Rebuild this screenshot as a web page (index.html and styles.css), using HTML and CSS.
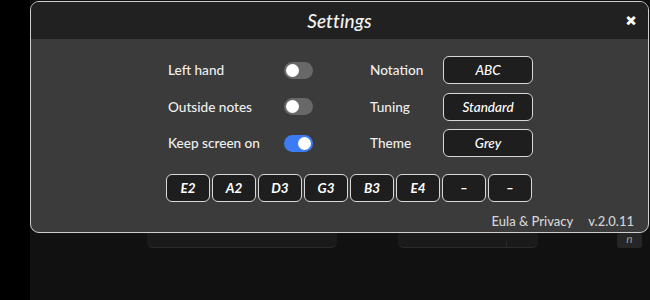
FILE: index.html
```html
<!DOCTYPE html>
<html>
<head>
<meta charset="utf-8">
<link rel="stylesheet" href="styles.css">
</head>
<body>
<div class="screen">
  <div class="side"></div>
  <div class="main">
    <div class="app-row">
      <div class="panel panel-a"></div>
      <div class="panel panel-b"><span class="divider"></span></div>
      <div class="mini">n</div>
    </div>
  </div>

  <div class="modal">
    <div class="modal-head">
      <span class="title">Settings</span>
      <span class="close">&#x2715;</span>
    </div>
    <div class="modal-body">
      <div class="grid">
        <span class="label">Left hand</span>
        <span class="toggle"><span class="knob"></span></span>
        <span class="label">Notation</span>
        <span class="btn">ABC</span>

        <span class="label">Outside notes</span>
        <span class="toggle"><span class="knob"></span></span>
        <span class="label">Tuning</span>
        <span class="btn">Standard</span>

        <span class="label">Keep screen on</span>
        <span class="toggle on"><span class="knob"></span></span>
        <span class="label">Theme</span>
        <span class="btn">Grey</span>
      </div>
      <div class="strings">
        <span class="sbtn">E2</span>
        <span class="sbtn">A2</span>
        <span class="sbtn">D3</span>
        <span class="sbtn">G3</span>
        <span class="sbtn">B3</span>
        <span class="sbtn">E4</span>
        <span class="sbtn">–</span>
        <span class="sbtn">–</span>
      </div>
      <div class="footer">
        <span class="link">Eula &amp; Privacy</span>
        <span class="version">v.2.0.11</span>
      </div>
    </div>
  </div>
</div>
</body>
</html>
```
FILE: styles.css
```css
* { box-sizing: border-box; }
html, body { margin: 0; padding: 0; }
body {
  width: 650px;
  height: 300px;
  background: #111111;
  font-family: "Lato", "Noto Sans", sans-serif;
  color: #eeeeee;
  overflow: hidden;
}
.screen {
  position: relative;
  display: flex;
  width: 650px;
  height: 300px;
}
.side {
  width: 30px;
  background: #000000;
}
.main {
  flex: 1;
  background: #111111;
  padding-top: 214px;
}
.app-row {
  display: flex;
  align-items: flex-end;
  height: 34px;
}
.panel {
  height: 24px;
  border-radius: 6px;
  background: #1a1a1a;
  border-bottom: 1px solid #2c2c2c;
}
.panel-a { margin-left: 117px; width: 190px; }
.panel-b { margin-left: 61px; width: 140px; position: relative; }
.divider {
  position: absolute;
  left: 108px;
  bottom: 0;
  width: 1px;
  height: 6px;
  background: #2a2a2a;
}
.mini {
  margin-left: 79px;
  width: 25px;
  height: 15px;
  border-radius: 3px;
  background: #262626;
  color: #999;
  font-style: italic;
  font-size: 12px;
  line-height: 12px;
  text-align: center;
}

.modal {
  position: absolute;
  left: 30px;
  top: 1px;
  width: 619px;
  height: 232px;
  border: 1px solid #cfcfcf;
  border-radius: 9px;
  background: #3b3b3b;
  overflow: hidden;
  display: flex;
  flex-direction: column;
}
.modal-head {
  height: 37px;
  flex: none;
  background: #212121;
  display: flex;
  align-items: center;
  justify-content: center;
  position: relative;
}
.title {
  font-style: italic;
  font-weight: 500;
  font-size: 19px;
  color: #f2f2f2;
  letter-spacing: 0.1px;
}
.close {
  position: absolute;
  right: 12px;
  top: 11px;
  font-size: 12px;
  font-weight: 900;
  color: #ffffff;
  -webkit-text-stroke: 1px #ffffff;
}
.modal-body {
  flex: 1;
  padding: 17px 14px 0 135px;
  display: flex;
  flex-direction: column;
}
.grid {
  display: grid;
  grid-template-columns: 116px 86px 73px 90px;
  grid-auto-rows: 28px;
  row-gap: 8.5px;
  align-items: center;
  padding-left: 2px;
}
.label {
  font-size: 13.6px;
  font-weight: 500;
  color: #efefef;
}
.toggle {
  width: 29px;
  height: 17px;
  border-radius: 9px;
  background: #686868;
  position: relative;
}
.knob {
  position: absolute;
  left: 2px;
  top: 2px;
  width: 13px;
  height: 13px;
  border-radius: 50%;
  background: #ffffff;
}
.toggle.on { background: #3b7cf4; }
.toggle.on .knob { left: 14px; }
.btn {
  height: 28px;
  border: 1.5px solid #d8d8d8;
  border-radius: 6px;
  background: #1e1e1e;
  display: flex;
  align-items: center;
  justify-content: center;
  font-style: italic;
  font-weight: 500;
  font-size: 13.5px;
  color: #ffffff;
}
.strings {
  display: flex;
  gap: 2px;
  margin-top: 17px;
}
.sbtn {
  width: 44px;
  height: 28px;
  border: 1.5px solid #d8d8d8;
  border-radius: 6px;
  background: #1e1e1e;
  display: flex;
  align-items: center;
  justify-content: center;
  font-style: italic;
  font-weight: 700;
  font-size: 13.5px;
  color: #ffffff;
}
.footer {
  margin-top: 11px;
  display: flex;
  justify-content: flex-end;
  gap: 15px;
  font-size: 13px;
  font-weight: 500;
  color: #d4d4d4;
}
```
